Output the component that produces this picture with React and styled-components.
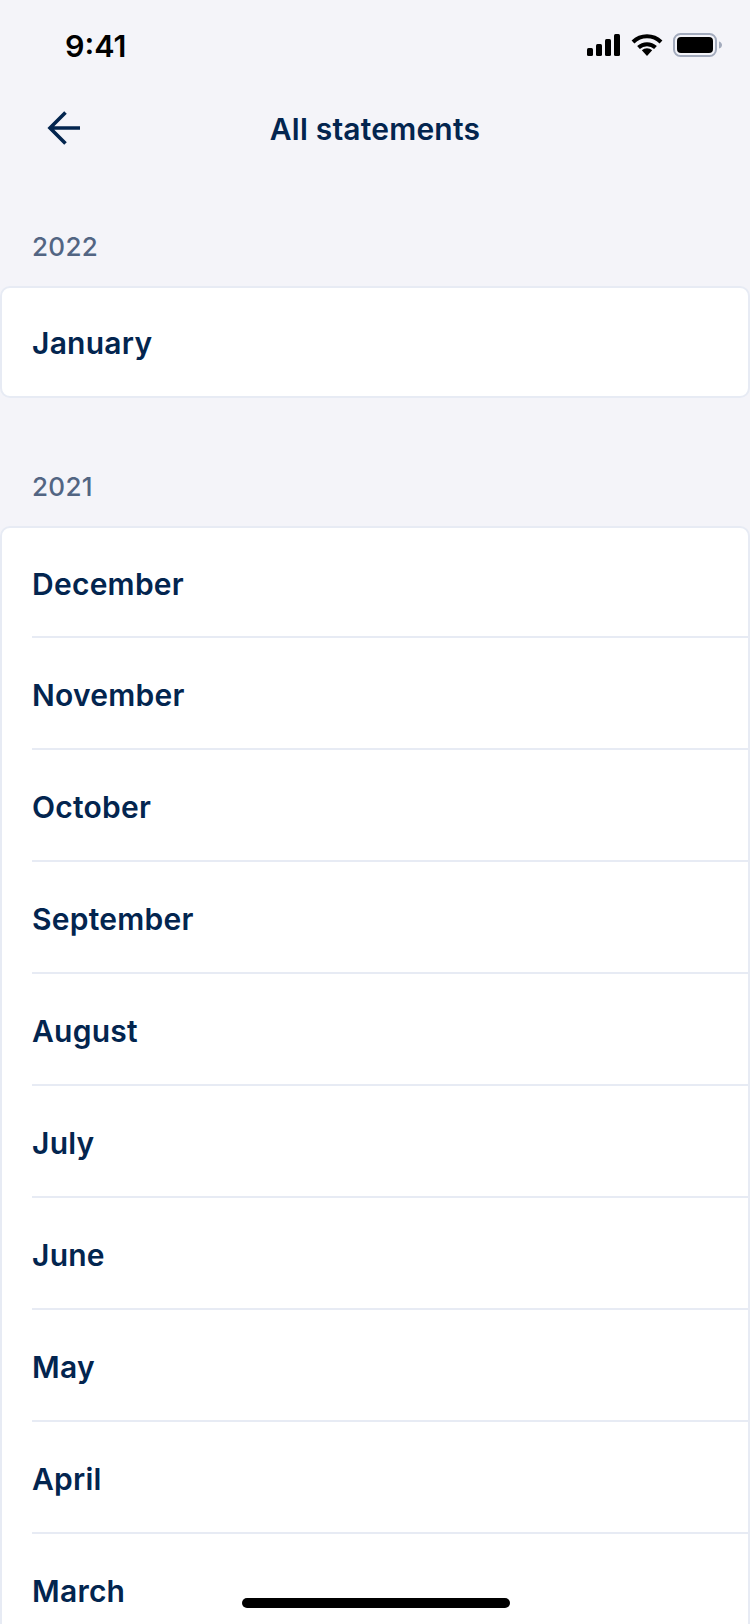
import React from "react";
import styled, { createGlobalStyle } from "styled-components";

const GlobalStyle = createGlobalStyle`
  html, body {
    margin: 0;
    padding: 0;
    background: #f4f4f9;
  }
  * {
    box-sizing: border-box;
  }
`;

const sections = [
  { year: "2022", months: ["January"] },
  {
    year: "2021",
    months: [
      "December",
      "November",
      "October",
      "September",
      "August",
      "July",
      "June",
      "May",
      "April",
      "March",
    ],
  },
];

export default function App() {
  return (
    <Screen>
      <GlobalStyle />
      <StatusBar>
        <Clock>9:41</Clock>
        <StatusIcons>
          <svg width="36" height="22" viewBox="0 0 36 22">
            <rect x="2" y="14" width="6" height="8" rx="1.5" fill="#000" />
            <rect x="11" y="10" width="6" height="12" rx="1.5" fill="#000" />
            <rect x="20" y="5" width="6" height="17" rx="1.5" fill="#000" />
            <rect x="29" y="0" width="6" height="22" rx="1.5" fill="#000" />
          </svg>
          <svg width="32" height="24" viewBox="0 0 32 24">
            <path d="M16 23 L10.8 17.2 A7.6 7.6 0 0 1 21.2 17.2 Z" fill="#000" />
            <path d="M2 9 A20 20 0 0 1 30 9" fill="none" stroke="#000" strokeWidth="4" />
            <path d="M7.5 14.5 A12.5 12.5 0 0 1 24.5 14.5" fill="none" stroke="#000" strokeWidth="4" />
          </svg>
          <svg width="50" height="24" viewBox="0 0 50 24">
            <rect x="1" y="1" width="42" height="22" rx="6.5" fill="none" stroke="#a3abbd" strokeWidth="2" />
            <rect x="4" y="4" width="36" height="16" rx="4" fill="#000" />
            <path d="M46 8.5 C48 9 49 10.5 49 12 C49 13.5 48 15 46 15.5 Z" fill="#a3abbd" />
          </svg>
        </StatusIcons>
      </StatusBar>
      <NavBar>
        <BackButton>
          <svg width="36" height="36" viewBox="0 0 36 36" fill="none">
            <path
              d="M34 18 H4 M19.5 2.5 L4 18 L19.5 33.5"
              stroke="#03254f"
              strokeWidth="3.6"
            />
          </svg>
        </BackButton>
        <Title>All statements</Title>
      </NavBar>
      {sections.map((section) => (
        <Section key={section.year}>
          <Year>{section.year}</Year>
          <Card>
            {section.months.map((month) => (
              <Row key={month}>
                <Month>{month}</Month>
              </Row>
            ))}
          </Card>
        </Section>
      ))}
      <HomeIndicator />
    </Screen>
  );
}

const Screen = styled.div`
  position: relative;
  width: 750px;
  height: 1624px;
  overflow: hidden;
  background: #f4f4f9;
  font-family: Inter, "Noto Sans", sans-serif;
  color: #03254f;
`;

const StatusBar = styled.div`
  display: flex;
  align-items: center;
  justify-content: space-between;
  height: 90px;
  padding: 0 27px 0 65px;
`;

const Clock = styled.span`
  font-size: 30.5px;
  font-weight: 600;
  color: #000;
`;

const StatusIcons = styled.div`
  display: flex;
  align-items: center;
  gap: 10px;
`;

const NavBar = styled.div`
  position: relative;
  display: flex;
  align-items: center;
  justify-content: center;
  height: 82px;
  padding-bottom: 4px;
  margin-bottom: 34px;
`;

const BackButton = styled.div`
  position: absolute;
  left: 46px;
  top: 20px;
  display: flex;
`;

const Title = styled.h1`
  margin: 0;
  font-size: 30px;
  font-weight: 600;
  letter-spacing: 0.2px;
`;

const Section = styled.section`
  & + & {
    margin-top: 48px;
  }
`;

const Year = styled.div`
  display: flex;
  align-items: center;
  height: 80px;
  padding-left: 32px;
  font-size: 26px;
  font-weight: 500;
  letter-spacing: 0.3px;
  color: #526583;
`;

const Card = styled.div`
  background: #fff;
  border: 2px solid #e7ebf4;
  border-radius: 10px;
`;

const Row = styled.div`
  display: flex;
  align-items: center;
  height: 112px;
  margin-left: 30px;
  padding-top: 3px;
  border-bottom: 2px solid #e7ebf4;
  &:first-child {
    height: 110px;
  }
  &:only-child {
    height: 108px;
    padding-top: 2px;
    border-bottom: 0;
  }
`;

const Month = styled.span`
  font-size: 30px;
  font-weight: 600;
  letter-spacing: 0.25px;
`;

const HomeIndicator = styled.div`
  position: absolute;
  left: 242px;
  top: 1598px;
  width: 268px;
  height: 10px;
  border-radius: 5px;
  background: #000;
`;
